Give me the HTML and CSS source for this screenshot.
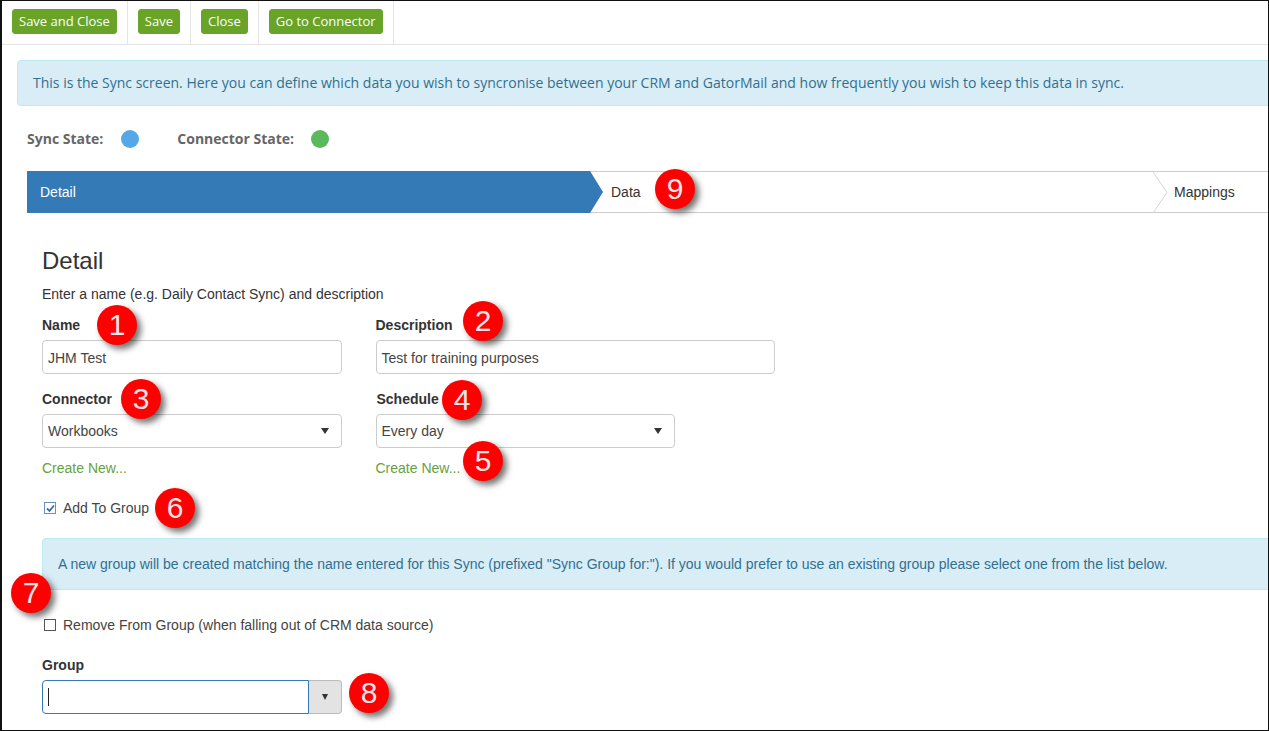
FILE: index.html
```html
<!DOCTYPE html>
<html lang="en">
<head>
<meta charset="utf-8">
<title>Sync</title>
<link rel="stylesheet" href="styles.css">
</head>
<body>
<div class="frame">
  <div class="toolbar">
    <div class="cell"><button class="btn">Save and Close</button></div>
    <div class="cell"><button class="btn">Save</button></div>
    <div class="cell"><button class="btn">Close</button></div>
    <div class="cell"><button class="btn">Go to Connector</button></div>
  </div>
  <div class="alert alert-top">This is the Sync screen. Here you can define which data you wish to syncronise between your CRM and GatorMail and how frequently you wish to keep this data in sync.</div>
  <div class="states">
    <span class="state-label">Sync State:</span><span class="dot dot-blue"></span>
    <span class="state-label state-second">Connector State:</span><span class="dot dot-green"></span>
  </div>
  <div class="steps">
    <div class="step step-active">Detail</div>
    <div class="step step-data">Data</div>
    <div class="step step-map">
      <svg class="chev" width="15" height="41" viewBox="0 0 15 41"><path d="M0 0 L14 20.5 L0 41" fill="#fff" stroke="#d4d4d4"/></svg>
      Mappings
    </div>
  </div>
  <div class="content">
    <h2 class="title">Detail</h2>
    <p class="hint">Enter a name (e.g. Daily Contact Sync) and description</p>
    <div class="row">
      <div class="field f-left"><label class="label">Name</label><div class="input">JHM Test</div></div>
      <div class="field f-desc"><label class="label">Description</label><div class="input">Test for training purposes</div></div>
    </div>
    <div class="row row-2">
      <div class="field f-left"><label class="label">Connector</label><div class="input select">Workbooks<span class="caret"></span></div><a class="link">Create New...</a></div>
      <div class="field f-sched"><label class="label label-sched">Schedule</label><div class="input select">Every day<span class="caret"></span></div><a class="link">Create New...</a></div>
    </div>
    <div class="check check-add"><span class="box box-on"><svg width="9" height="9" viewBox="0 0 9 9"><path d="M1 4.5 L3.5 7 L8 1.5" fill="none" stroke="#3a6ea5" stroke-width="1.8"/></svg></span>Add To Group</div>
    <div class="alert alert-group">A new group will be created matching the name entered for this Sync (prefixed "Sync Group for:"). If you would prefer to use an existing group please select one from the list below.</div>
    <div class="check check-remove"><span class="box"></span>Remove From Group (when falling out of CRM data source)</div>
    <label class="label label-group">Group</label>
    <div class="combo"><div class="combo-text"><span class="cursor"></span></div><div class="combo-btn"><span class="caret"></span></div></div>
  </div>
  <span class="badge b1">1</span>
  <span class="badge b2">2</span>
  <span class="badge b3">3</span>
  <span class="badge b4">4</span>
  <span class="badge b5">5</span>
  <span class="badge b6">6</span>
  <span class="badge b7">7</span>
  <span class="badge b8">8</span>
  <span class="badge b9">9</span>
</div>
</body>
</html>
```
FILE: styles.css
```css
* { box-sizing: border-box; }
html, body { margin: 0; padding: 0; }
body { background: #fff; overflow: hidden; }
.frame {
  position: relative;
  width: 1269px;
  height: 731px;
  overflow: hidden;
  background: #fff;
  border-top: 1px solid #111;
  border-left: 2px solid #111;
  border-right: 1px solid #111;
  border-bottom: 1px solid #111;
  font-family: "Liberation Sans", Arial, sans-serif;
  font-size: 14px;
  color: #333;
}
.toolbar {
  display: flex;
  height: 44px;
  border-bottom: 1px solid #e5e5e5;
}
.cell {
  display: flex;
  align-items: flex-start;
  padding: 8px 10px 0;
  border-right: 1px solid #e5e5e5;
}
.btn {
  height: 25px;
  padding: 0 6px 2px;
  border: 1px solid #69a428;
  border-radius: 3px;
  background: #69a428;
  color: #fff;
  font-family: "Open Sans", sans-serif;
  font-size: 13px;
  line-height: 20px;
  white-space: nowrap;
}
.alert {
  background: #d9edf7;
  border: 1px solid #bce8f1;
  color: #31708f;
  border-radius: 4px 0 0 4px;
  white-space: nowrap;
}
.alert-top {
  margin: 15px -4px 0 15px;
  height: 46px;
  padding: 0 15px;
  line-height: 44px;
  font-family: "Open Sans", sans-serif;
  font-size: 14px;
}
.states {
  display: flex;
  align-items: center;
  height: 18px;
  margin: 24px 0 0 25px;
  font-family: "Open Sans", sans-serif;
}
.state-label { padding-bottom: 2px; font-weight: 700; font-size: 14px; color: #666; }
.state-second { margin-left: 38px; }
.dot { width: 18px; height: 18px; border-radius: 50%; margin-left: 17px; }
.dot-blue { margin-left: 18px; background: #55a8e8; }
.dot-green { background: #5cb85c; }
.steps {
  display: flex;
  height: 42px;
  margin: 23px -2px 0 25px;
  border-top: 1px solid #ccc;
  border-bottom: 1px solid #ccc;
  line-height: 40px;
}
.step { position: relative; font-size: 14px; }
.step-active {
  width: 576px;
  height: 42px;
  margin-top: -1px;
  padding-left: 13px;
  line-height: 42px;
  background: #337ab7;
  color: #fff;
  clip-path: polygon(0 0, 563px 0, 576px 21px, 563px 42px, 0 42px);
}
.step-data { width: 550px; padding-left: 8px; }
.step-map { flex: 1; padding-left: 21px; }
.chev { position: absolute; left: 0; top: 0; }
.content { padding: 0 0 0 40px; }
.title {
  margin: 33px 0 0;
  font-size: 24px;
  font-weight: 400;
  line-height: 30px;
  color: #333;
}
.hint { margin: 8px 0 0; font-size: 14px; line-height: 20px; }
.row { display: flex; margin-top: 11px; }
.row-2 { margin-top: 15px; }
.field { display: flex; flex-direction: column; }
.f-left { width: 300px; margin-right: 33.5px; }
.f-desc { width: 399px; }
.f-sched { width: 299px; }
.label { display: block; font-weight: 700; font-size: 14px; line-height: 20px; height: 20px; color: #333; }
.label-sched { margin-left: 1px; }
.input {
  position: relative;
  height: 34px;
  margin-top: 5px;
  padding: 0 5px;
  border: 1px solid #ccc;
  border-radius: 4px;
  line-height: 34px;
  font-size: 14px;
  color: #444;
  background: #fff;
}
.select { line-height: 32px; }
.caret {
  display: block;
  width: 0;
  height: 0;
  border-left: 3.5px solid transparent;
  border-right: 3.5px solid transparent;
  border-top: 6px solid #333;
}
.select .caret {
  position: absolute;
  right: 12px;
  top: 13px;
  border-left-width: 4px;
  border-right-width: 4px;
}
.link { margin-top: 10px; line-height: 20px; color: #69a040; font-size: 14px; }
.check { display: flex; align-items: center; height: 20px; font-size: 14px; color: #444; }
.check-add { margin-top: 20px; margin-left: 2px; }
.box {
  display: flex;
  align-items: center;
  justify-content: center;
  width: 12px;
  height: 12px;
  margin-right: 7px;
  border: 1px solid #555;
  background: #fff;
}
.box-on { border-color: #6b8fc0; }
.alert-group {
  margin: 20px -4px 0 0;
  height: 52px;
  padding: 0 15px;
  line-height: 50px;
  font-size: 14px;
}
.check-remove { margin-top: 25px; margin-left: 2px; }
.label-group { margin-top: 20px; }
.combo {
  display: flex;
  width: 300px;
  height: 34px;
  margin-top: 5px;
}
.combo-text {
  flex: 1;
  display: flex;
  align-items: center;
  padding-left: 5px;
  border: 1px solid #337ab7;
  border-radius: 4px 0 0 4px;
}
.cursor { width: 1px; height: 18px; background: #222; }
.combo-btn {
  width: 33px;
  display: flex;
  align-items: center;
  justify-content: center;
  background: #e3e3e3;
  border: 1px solid #bbb;
  border-left-width: 0;
  border-radius: 0 4px 4px 0;
}
.badge {
  position: absolute;
  width: 40px;
  height: 40px;
  border-radius: 50%;
  background: #f00;
  color: #f2e6e6;
  font-size: 30px;
  line-height: 40px;
  text-align: center;
  box-shadow: 4px 4px 6px rgba(0, 0, 0, .55);
}
.b1 { left: 95px; top: 304px; }
.b2 { left: 461px; top: 300px; }
.b3 { left: 119px; top: 378px; }
.b4 { left: 440px; top: 379px; }
.b5 { left: 461px; top: 440px; }
.b6 { left: 153px; top: 487px; }
.b7 { left: 9px; top: 572px; }
.b8 { left: 347px; top: 672px; }
.b9 { left: 653px; top: 168px; }
```
